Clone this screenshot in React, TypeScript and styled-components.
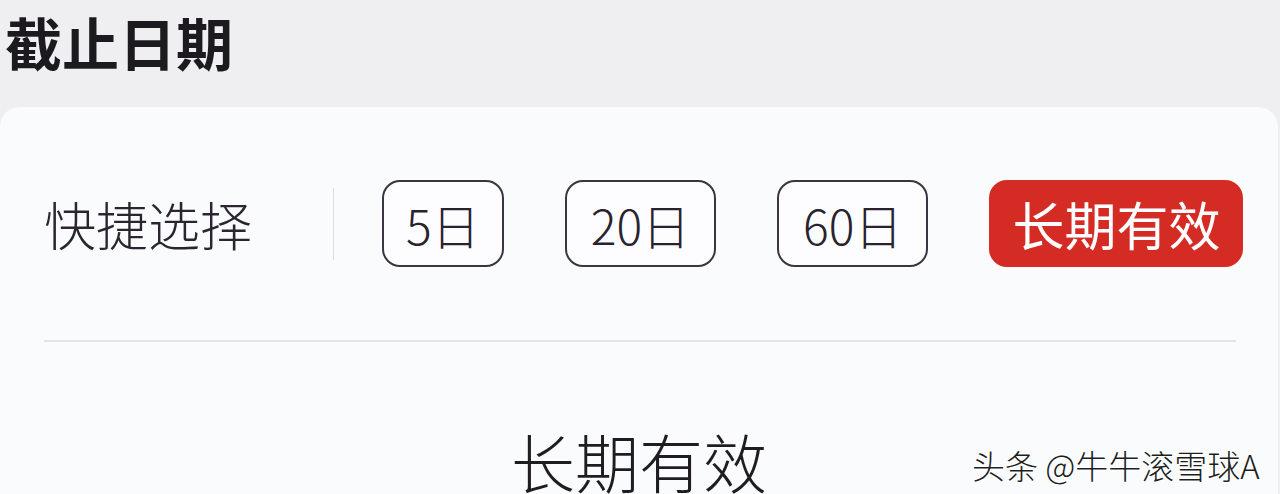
import React from "react";
import styled, { createGlobalStyle } from "styled-components";

const GlobalStyle = createGlobalStyle`
  html, body {
    margin: 0;
    padding: 0;
    background: #efeff1;
    font-family: "Noto Sans CJK SC", "Noto Sans", sans-serif;
    overflow: hidden;
  }
`;

const Page = styled.div`
  position: relative;
  width: 1280px;
  height: 494px;
  overflow: hidden;
`;

const Header = styled.div`
  height: 107px;
  padding-left: 5px;
  box-sizing: border-box;
`;

const Title = styled.h1`
  margin: 0;
  padding-top: 10px;
  font-size: 57px;
  line-height: 1.1;
  font-weight: 700;
  color: #1c1a1f;
`;

const Card = styled.div`
  width: 1278px;
  height: 400px;
  background: #fafbfd;
  border-radius: 20px 20px 0 0;
  padding: 73px 42px 0 44px;
  box-sizing: border-box;
`;

const Row = styled.div`
  display: flex;
  align-items: center;
  height: 87px;
  white-space: nowrap;
`;

const Label = styled.div`
  flex-shrink: 0;
  font-size: 52px;
  line-height: 1;
  color: #2b2530;
  font-weight: 300;
`;

const VDivider = styled.div`
  flex-shrink: 0;
  width: 1px;
  height: 72px;
  background: #dcdde3;
  margin-left: 81px;
  margin-right: 48px;
`;

const Options = styled.div`
  display: flex;
  flex-shrink: 0;
  gap: 61px;
`;

const Chip = styled.button<{ active?: boolean; pad: number }>`
  flex-shrink: 0;
  white-space: nowrap;
  height: 87px;
  padding: 0 ${(p) => p.pad}px;
  box-sizing: border-box;
  border-radius: 18px;
  border: 2px solid ${(p) => (p.active ? "#d42b25" : "#3a3540")};
  background: ${(p) => (p.active ? "#d42b25" : "#fdfdff")};
  color: ${(p) => (p.active ? "#fff" : "#28232d")};
  font-family: inherit;
  font-weight: ${(p) => (p.active ? 400 : 300)};
  font-size: ${(p) => (p.active ? 52 : 48)}px;
  line-height: 1;
  display: flex;
  align-items: center;
  justify-content: center;
`;

const HLine = styled.div`
  height: 2px;
  background: #e1e6ec;
  margin-top: 73px;
`;

const Value = styled.div`
  text-align: center;
  font-size: 64px;
  font-weight: 300;
  line-height: 1;
  color: #1f1c22;
  margin-top: 86px;
  margin-left: -2px;
`;

const Watermark = styled.div`
  position: absolute;
  left: 972px;
  top: 441px;
  font-size: 33px;
  font-weight: 300;
  color: #1e1e1e;
  white-space: nowrap;
  text-shadow: 0 0 2px #fff, 1px 1px 0 #fff, -1px -1px 0 #fff, 1px -1px 0 #fff, -1px 1px 0 #fff;
`;

const options = [
  { text: "5日", pad: 22 },
  { text: "20日", pad: 24 },
  { text: "60日", pad: 24 },
  { text: "长期有效", pad: 21, active: true },
];

export default function App() {
  return (
    <Page>
      <GlobalStyle />
      <Header>
        <Title>截止日期</Title>
      </Header>
      <Card>
        <Row>
          <Label>快捷选择</Label>
          <VDivider />
          <Options>
            {options.map((o) => (
              <Chip key={o.text} active={o.active} pad={o.pad}>
                {o.text}
              </Chip>
            ))}
          </Options>
        </Row>
        <HLine />
        <Value>长期有效</Value>
      </Card>
      <Watermark>头条 @牛牛滚雪球A</Watermark>
    </Page>
  );
}
